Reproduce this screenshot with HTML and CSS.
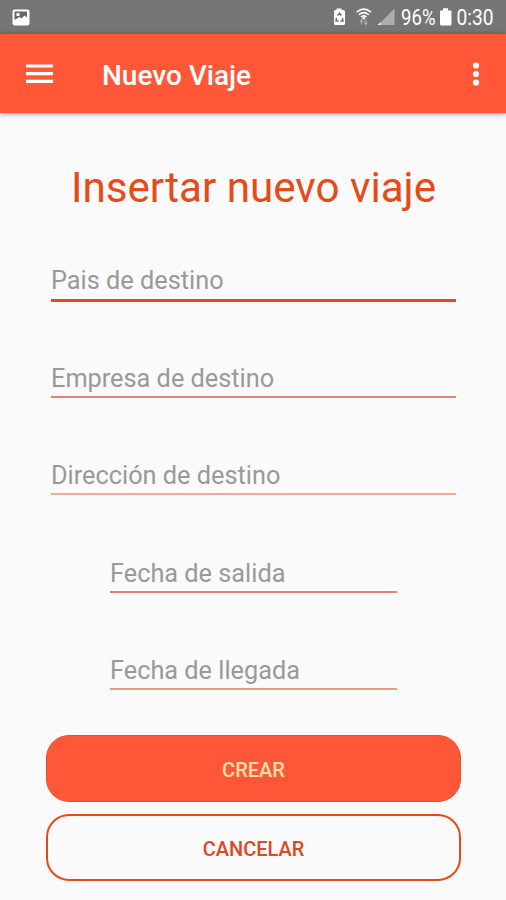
FILE: index.html
```html
<!DOCTYPE html>
<html lang="es">
<head>
<meta charset="utf-8">
<title>Nuevo Viaje</title>
<link rel="stylesheet" href="styles.css">
</head>
<body>
<div class="status">
  <svg class="picture" width="18" height="17" viewBox="0 0 18 17"><rect x=".5" y=".5" width="17" height="16" rx="2" fill="#fff"/><path d="M2.500 2.500h12.500v6l-2.500-2-3 3-2-1.500-5 3z" fill="#666"/><rect x="4.500" y="4" width="3" height="3" fill="#fff"/></svg>
  <svg class="status-icons" width="184" height="34" viewBox="0 0 184 34">
    <path d="M14 11.500q0-1.500 1.500-1.500h1V8.500h5V10h1.500q2 0 2 1.500v12q0 1.500-1.500 1.500h-8Q14 25 14 23.500z" fill="#fff"/>
    <path d="M17.600 15.500l1.900-2.300 1.900 2.300M16.600 18l-.6 3h2.500M22.400 18l.6 3h-2.500" fill="none" stroke="#707070" stroke-width="1.500"/>
    <g fill="none" stroke="#fff" stroke-width="1.500"><path d="M36.500 12.300q7.300-6.300 14.600 0"/><path d="M38.800 14.800q5-4.300 10 0"/><path d="M41 17q2.800-2.300 5.600 0"/></g>
    <circle cx="43.800" cy="18.300" r="1.300" fill="#fff"/>
    <path d="M41.500 19.500v5M39.800 22l1.700-2.200 1.700 2.200M45.800 19v5.500M44.100 22.300l1.700 2.200 1.700-2.200" fill="none" stroke="#aaa" stroke-width="1.100"/>
    <path d="M74.500 8.500V25H58z" fill="#adadad"/><path d="M60.500 22.300V25h-2.800z" fill="#fff"/>
    <text x="81" y="25" textLength="34.500" lengthAdjust="spacingAndGlyphs">96%</text>
    <path d="M120 11.500q0-1 1-1h2V8.300h5v2.200h2.500q1 0 1 1V24q0 1.500-1.500 1.500h-8.500Q120 25.500 120 24z" fill="#fff"/>
    <text x="136.500" y="25" textLength="37" lengthAdjust="spacingAndGlyphs">0:30</text>
  </svg>
</div>
<header class="appbar">
  <svg class="menu" width="27" height="20" viewBox="0 0 27 20"><path d="M0 2h27M0 9.700h27M0 17.300h27" stroke="#fff" stroke-width="3.200"/></svg>
  <span class="appbar-title">Nuevo Viaje</span>
  <svg class="more" width="8" height="24" viewBox="0 0 8 24" fill="#fff"><circle cx="4" cy="3.500" r="3.100"/><circle cx="4" cy="12" r="3.100"/><circle cx="4" cy="20.500" r="3.100"/></svg>
</header>
<main class="content">
  <h1 class="title">Insertar nuevo viaje</h1>
  <form class="form">
    <label class="field focused">Pais de destino</label>
    <label class="field company">Empresa de destino</label>
    <label class="field address">Dirección de destino</label>
    <label class="field date departure">Fecha de salida</label>
    <label class="field date arrival">Fecha de llegada</label>
    <button class="button create" type="button">CREAR</button>
    <button class="button cancel" type="button">CANCELAR</button>
  </form>
</main>
</body>
</html>
```
FILE: styles.css
```css
* { box-sizing: border-box; }
body {
  margin: 0;
  height: 900px;
  overflow: hidden;
  background: #fafafa;
  font-family: Roboto, "Liberation Sans", sans-serif;
}
svg { display: block; flex: none; }
.status {
  display: flex;
  justify-content: space-between;
  height: 34px;
  padding: 0 2px 0 12px;
  background: #757575;
}
.picture { margin-top: 8.500px; }
.status-icons text { font-size: 21.500px; fill: #fff; }
.appbar {
  display: flex;
  align-items: center;
  height: 79px;
  padding: 0 26px;
  background: #ff5738;
  box-shadow: 0 1px 5px rgba(0, 0, 0, .38);
}
.appbar-title {
  flex: 1;
  margin-left: 49px;
  padding-top: 3px;
  font-size: 28px;
  font-weight: 500;
  color: #fff;
}
.content { padding: 50px 45px 0; }
.title {
  margin: 0;
  height: 50px;
  line-height: 50px;
  padding-left: 1px;
  text-align: center;
  font-size: 42.200px;
  font-weight: 400;
  color: #e64a19;
  white-space: nowrap;
}
.form { display: flex; flex-direction: column; padding-top: 49px; }
.field {
  height: 38px;
  margin: 0 5px 59.500px 6px;
  line-height: 38px;
  font-size: 25.300px;
  color: #999;
  border-bottom: 2px solid #e58475;
}
.focused { height: 39.500px; margin-bottom: 58.200px; border-bottom: 3px solid #e8491c; }
.company { border-color: #e58370; }
.address { border-color: #efaaa0; }
.date { margin-left: 65px; margin-right: 64px; }
.departure { border-color: #df8478; }
.arrival { margin-bottom: 45px; border-color: #ed9885; }
.button {
  height: 67px;
  margin: 0 0 12px 1px;
  padding: 3px 0 0;
  border: 2.500px solid #e64a19;
  border-radius: 23px;
  font-family: inherit;
  font-size: 20px;
  font-weight: 500;
}
.create { background: #ff5738; border: 1px solid #f04d25; color: #ffe0a8; }
.cancel { background: transparent; color: #dc4724; }
```
